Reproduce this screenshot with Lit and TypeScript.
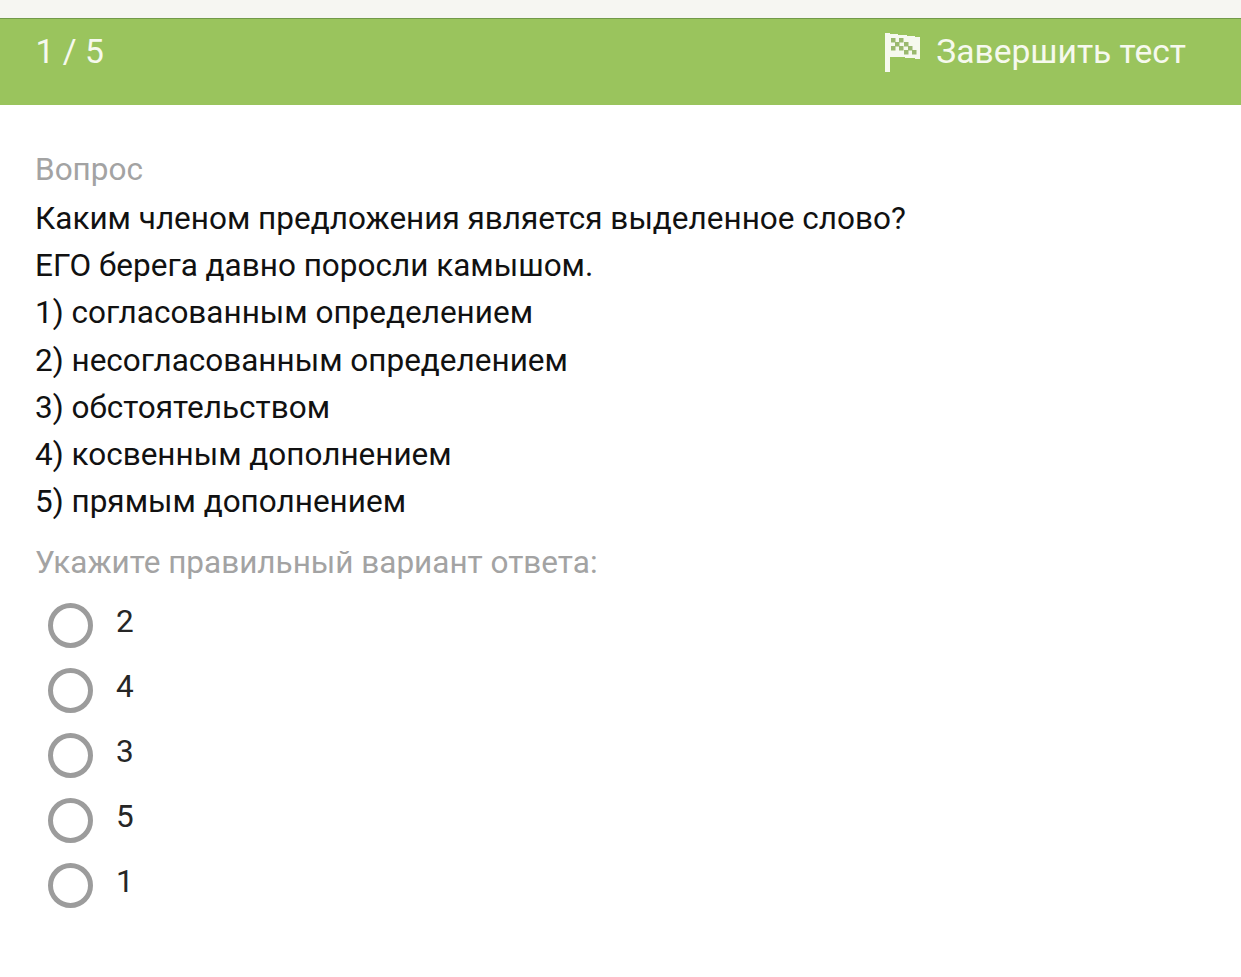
import { LitElement, html, css, svg } from "lit";
import { customElement } from "lit/decorators.js";

const checks = [
  [6, 5], [14, 5], [10, 9], [19, 9], [6, 13], [14, 13], [23, 13], [19, 17], [27, 17],
];

@customElement("app-root")
export class AppRoot extends LitElement {
  static styles = css`
    :host {
      display: block;
      min-height: 977px;
      background: #fff;
      font-family: Roboto, "Liberation Sans", sans-serif;
      font-size: 31.5px;
      color: #1c1c1c;
    }
    .strip {
      height: 18px;
      background: #f6f6f2;
    }
    .bar {
      border-top: 1px solid #729a4a;
      background: #9ac45d;
      color: #f6f9ee;
      padding: 13px 55px 0 35.5px;
      box-sizing: border-box;
      height: 87px;
      display: flex;
      justify-content: space-between;
      align-items: flex-start;
      line-height: 40px;
      font-size: 33.6px;
    }
    .finish {
      display: flex;
      gap: 16px;
    }
    .flag {
      width: 35px;
      height: 39px;
      margin-top: 1px;
    }
    .content {
      padding: 41px 35px 0;
    }
    .label {
      color: #a3a3a3;
      line-height: 47px;
      margin-bottom: 2px;
    }
    .question {
      color: #111;
      line-height: 47.2px;
    }
    .hint {
      color: #a3a3a3;
      line-height: 47px;
      margin-top: 13.6px;
    }
    .options {
      display: flex;
      flex-direction: column;
      margin-top: 17px;
      padding-left: 13px;
    }
    .option {
      display: flex;
      height: 65.1px;
      gap: 23px;
    }
    .radio {
      width: 45px;
      height: 45px;
      border: 5px solid #9c9c9c;
      border-radius: 50%;
      box-sizing: border-box;
    }
    .val {
      line-height: 38px;
      color: #262626;
    }
  `;

  render() {
    const lines = [
      "Каким членом предложения является выделенное слово?",
      "ЕГО берега давно поросли камышом.",
      "1) согласованным определением",
      "2) несогласованным определением",
      "3) обстоятельством",
      "4) косвенным дополнением",
      "5) прямым дополнением",
    ];
    return html`
      <div class="strip"></div>
      <header class="bar">
        <span>1 / 5</span>
        <span class="finish">
          <svg class="flag" viewBox="0 0 35 39">
            <path fill="#f6f9ee" d="M0 0H5V1H13V2H22V3H30V4H35V26H30V25H20V24H5V39H0Z" />
            ${checks.map(([x, y]) => svg`<rect x=${x} y=${y} width="4.5" height="4.5" fill="#9ab96e" />`)}
          </svg>
          <span>Завершить тест</span>
        </span>
      </header>
      <main class="content">
        <div class="label">Вопрос</div>
        <div class="question">${lines.map((l) => html`<div>${l}</div>`)}</div>
        <div class="hint">Укажите правильный вариант ответа:</div>
        <div class="options">
          ${["2", "4", "3", "5", "1"].map(
            (v) => html`<div class="option"><span class="radio"></span><span class="val">${v}</span></div>`,
          )}
        </div>
      </main>
    `;
  }
}
